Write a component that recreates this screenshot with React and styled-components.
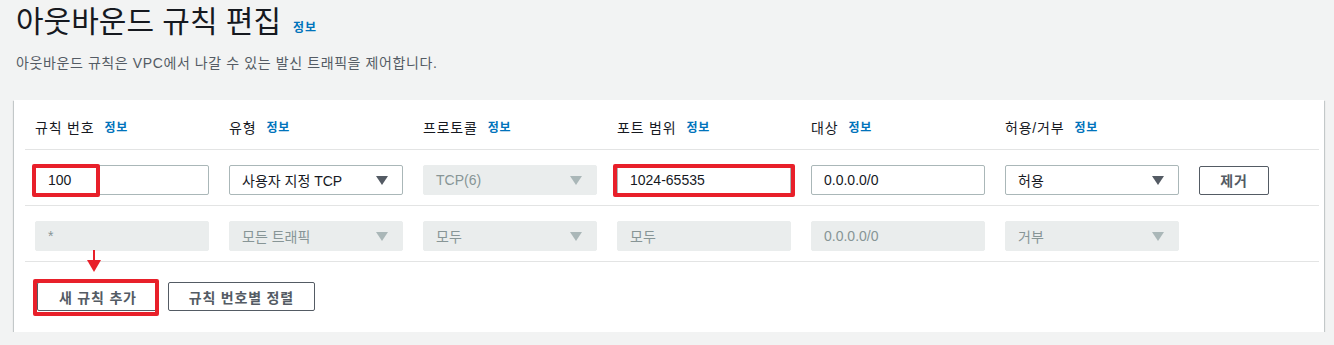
import React from "react";
import styled, { createGlobalStyle } from "styled-components";

const GlobalStyle = createGlobalStyle`
  body {
    margin: 0;
    background: #f2f3f3;
    font-family: "Liberation Sans", "Noto Sans CJK KR", sans-serif;
    color: #16191f;
  }
`;

const Page = styled.div`
  padding: 0 10px 0 14px;
`;

const TitleRow = styled.div`
  display: flex;
  align-items: baseline;
  gap: 12px;
  padding: 4px 0 0 2px;
`;

const Title = styled.h1`
  margin: 0;
  font-size: 30px;
  font-weight: 400;
  line-height: 36px;
  color: #16191f;
`;

const Info = styled.a`
  font-size: 12px;
  font-weight: 700;
  letter-spacing: 0.8px;
  color: #0073bb;
  text-decoration: none;
`;

const Subtitle = styled.p`
  margin: 12px 0 0 2px;
  font-size: 14px;
  line-height: 22px;
  letter-spacing: 0.6px;
  color: #545b64;
`;

const Card = styled.section`
  margin-top: 26px;
  width: 1310px;
  background: #fff;
  box-shadow: 0 1px 1px 0 rgba(0, 28, 36, 0.3), 1px 1px 1px 0 rgba(0, 28, 36, 0.15),
    -1px 1px 1px 0 rgba(0, 28, 36, 0.15);
  padding: 0 5px 0 11px;
  box-sizing: border-box;
`;

const Row = styled.div`
  display: grid;
  grid-template-columns: repeat(6, 174px) 70px;
  column-gap: 20px;
  align-items: center;
  padding: ${({ $head }) => ($head ? "18px 10px 11px" : "15px 10px 10px")};
  border-bottom: 1px solid #e3e4e4;
`;

const Label = styled.div`
  display: flex;
  align-items: center;
  gap: 10px;
  font-size: 14px;
  line-height: 20px;
  letter-spacing: 0.8px;
  color: #16191f;
`;

const Cell = styled.div`
  position: relative;
  height: 30px;
`;

const Field = styled.div`
  display: flex;
  align-items: center;
  justify-content: space-between;
  height: 30px;
  box-sizing: border-box;
  padding: 0 12px 0 12px;
  border-radius: 2px;
  font-size: 14px;
  border: 1px solid ${({ $off }) => ($off ? "#eaeded" : "#aab7b8")};
  background: ${({ $off }) => ($off ? "#eaeded" : "#fff")};
  color: ${({ $off }) => ($off ? "#879596" : "#16191f")};
`;

const Caret = styled.span`
  width: 0;
  height: 0;
  border-left: 6px solid transparent;
  border-right: 6px solid transparent;
  border-top: 9px solid ${({ $off }) => ($off ? "#aab7b8" : "#545b64")};
  margin-right: 2px;
`;

const Highlight = styled.div`
  position: absolute;
  top: ${({ $top }) => $top ?? -1}px;
  left: ${({ $left }) => $left}px;
  width: ${({ $w }) => $w}px;
  height: ${({ $h }) => $h || 33}px;
  border: 4px solid #e8202a;
  border-radius: 2px;
  box-sizing: border-box;
  pointer-events: none;
`;

const Button = styled.button`
  height: 29px;
  padding: 0 ${({ $pad }) => $pad || 20}px;
  border: 1px solid #545b64;
  border-radius: 2px;
  background: #fff;
  font-family: inherit;
  font-size: 14px;
  font-weight: 600;
  color: #545b64;
  letter-spacing: 0.8px;
`;

const Footer = styled.div`
  display: flex;
  align-items: center;
  gap: 9px;
  padding: 20px 10px 21px 12px;
`;

const AddWrap = styled.div`
  position: relative;
`;

const Arrow = styled.div`
  position: absolute;
  left: 50px;
  top: -32px;
  width: 14px;
  height: 22px;
  &::before {
    content: "";
    position: absolute;
    left: 6px;
    top: 0;
    width: 2px;
    height: 12px;
    background: #e8202a;
  }
  &::after {
    content: "";
    position: absolute;
    left: 0;
    top: 10px;
    border-left: 7px solid transparent;
    border-right: 7px solid transparent;
    border-top: 12px solid #e8202a;
  }
`;

const cols = ["규칙 번호", "유형", "프로토콜", "포트 범위", "대상", "허용/거부"];

const Select = ({ value, off }) => (
  <Field $off={off}>
    <span>{value}</span>
    <Caret $off={off} />
  </Field>
);

export default function App() {
  return (
    <Page>
      <GlobalStyle />
      <TitleRow>
        <Title>아웃바운드 규칙 편집</Title>
        <Info>정보</Info>
      </TitleRow>
      <Subtitle>아웃바운드 규칙은 VPC에서 나갈 수 있는 발신 트래픽을 제어합니다.</Subtitle>
      <Card>
        <Row $head>
          {cols.map((c) => (
            <Label key={c}>
              {c}
              <Info>정보</Info>
            </Label>
          ))}
          <div />
        </Row>
        <Row>
          <Cell>
            <Field>100</Field>
            <Highlight $left={-3} $w={68} />
          </Cell>
          <Cell>
            <Select value="사용자 지정 TCP" />
          </Cell>
          <Cell>
            <Select value="TCP(6)" off />
          </Cell>
          <Cell>
            <Field>1024-65535</Field>
            <Highlight $left={-4} $w={182} />
          </Cell>
          <Cell>
            <Field>0.0.0.0/0</Field>
          </Cell>
          <Cell>
            <Select value="허용" />
          </Cell>
          <Button>제거</Button>
        </Row>
        <Row>
          <Cell>
            <Field $off>*</Field>
          </Cell>
          <Cell>
            <Select value="모든 트래픽" off />
          </Cell>
          <Cell>
            <Select value="모두" off />
          </Cell>
          <Cell>
            <Field $off>모두</Field>
          </Cell>
          <Cell>
            <Field $off>0.0.0.0/0</Field>
          </Cell>
          <Cell>
            <Select value="거부" off />
          </Cell>
          <div />
        </Row>
        <Footer>
          <AddWrap>
            <Arrow />
            <Button $pad={21}>새 규칙 추가</Button>
            <Highlight $left={-4} $top={-3} $w={126} $h={37} />
          </AddWrap>
          <Button>규칙 번호별 정렬</Button>
        </Footer>
      </Card>
    </Page>
  );
}
